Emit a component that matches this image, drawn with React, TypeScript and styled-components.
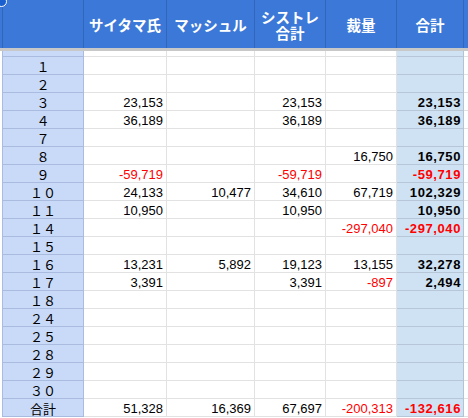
import React, { FC } from "react";
import styled, { createGlobalStyle, css } from "styled-components";

const GlobalStyle = createGlobalStyle`
  html, body {
    margin: 0;
    padding: 0;
    background: #ffffff;
  }
`;

const COLUMNS = "3px 81px 83px 88px 71px 71px 67px 1fr";

const Sheet = styled.div`
  position: relative;
  width: 468px;
  height: 418px;
  overflow: hidden;
  background: #ffffff;
  font-family: "Liberation Sans", Arial, "Noto Sans CJK JP", sans-serif;
`;

const Handle = styled.div`
  position: absolute;
  left: -4px;
  top: -4px;
  width: 9px;
  height: 9px;
  border-radius: 50%;
  background: #1a5fcf;
  border: 1.5px solid #ffffff;
`;

const HeaderRow = styled.div`
  display: grid;
  grid-template-columns: ${COLUMNS};
  height: 48px;
  background: #3c78d8;
`;

const HeaderCell = styled.div`
  display: flex;
  flex-direction: column;
  align-items: center;
  justify-content: center;
  padding-top: 1px;
  border-right: 1px solid #3166bd;
  color: #ffffff;
  font-family: "Noto Sans CJK JP", sans-serif;
  font-weight: 700;
  font-size: 14.5px;
  line-height: 17px;
  text-align: center;

  &:last-child {
    border-right: none;
  }
`;

const HeaderLine = styled.span`
  display: block;
  line-height: 16px;
  height: 16px;
`;

const FreezeBar = styled.div`
  height: 3px;
  background: #c8c8c8;
`;

const Row = styled.div<{ $h: number }>`
  display: grid;
  grid-template-columns: ${COLUMNS};
  height: ${({ $h }) => $h}px;
`;

type Kind = "strip" | "head" | "data" | "sum" | "rest";

const Cell = styled.div<{ $kind: Kind; $neg?: boolean }>`
  box-sizing: border-box;
  overflow: hidden;
  white-space: nowrap;
  border-bottom: 1px solid #e2e2e2;
  border-right: 1px solid #e2e2e2;
  font-size: 13px;
  line-height: 17px;
  padding-top: 1px;
  color: ${({ $neg }) => ($neg ? "#ff0000" : "#000000")};
  text-align: right;
  padding-right: 3px;

  ${({ $kind }) =>
    $kind === "strip" &&
    css`
      border-bottom: none;
      border-right-color: #a9bbdf;
      padding-right: 0;
    `}

  ${({ $kind }) =>
    $kind === "head" &&
    css`
      background: #c9daf8;
      border-bottom-color: #a9bbdf;
      border-right-color: #a9bbdf;
      text-align: center;
      padding-right: 0;
      font-family: "Noto Sans CJK JP", sans-serif;
      font-size: 13px;
    `}

  ${({ $kind }) =>
    $kind === "sum" &&
    css`
      background: #cfe2f3;
      border-bottom-color: #b7c7d7;
      border-right-color: #b3c3d3;
      font-weight: 700;
      letter-spacing: 0.6px;
      padding-right: 2px;
    `}

  ${({ $kind }) =>
    $kind === "rest" &&
    css`
      border-right: none;
      padding-right: 0;
    `}
`;

type Val = number | null;
type RowData = [string, Val, Val, Val, Val, Val];

const E: Val = null;

const ROWS: RowData[] = [
  ["１", E, E, E, E, E],
  ["２", E, E, E, E, E],
  ["３", 23153, E, 23153, E, 23153],
  ["４", 36189, E, 36189, E, 36189],
  ["７", E, E, E, E, E],
  ["８", E, E, E, 16750, 16750],
  ["９", -59719, E, -59719, E, -59719],
  ["１０", 24133, 10477, 34610, 67719, 102329],
  ["１１", 10950, E, 10950, E, 10950],
  ["１４", E, E, E, -297040, -297040],
  ["１５", E, E, E, E, E],
  ["１６", 13231, 5892, 19123, 13155, 32278],
  ["１７", 3391, E, 3391, -897, 2494],
  ["１８", E, E, E, E, E],
  ["２４", E, E, E, E, E],
  ["２５", E, E, E, E, E],
  ["２８", E, E, E, E, E],
  ["２９", E, E, E, E, E],
  ["３０", E, E, E, E, E],
  ["合計", 51328, 16369, 67697, -200313, -132616],
];

const fmt = (v: Val) => (v === null ? "" : v.toLocaleString("en-US"));

const SheetRow: FC<{ label: string; values: Val[]; height: number }> = ({
  label,
  values,
  height,
}) => (
  <Row $h={height}>
    <Cell $kind="strip" />
    <Cell $kind="head">{label}</Cell>
    {values.map((v, i) => (
      <Cell
        key={i}
        $kind={i === values.length - 1 ? "sum" : "data"}
        $neg={v !== null && v < 0}
      >
        {fmt(v)}
      </Cell>
    ))}
    <Cell $kind="rest" />
  </Row>
);

const App: FC = () => {
  return (
    <>
      <GlobalStyle />
      <Sheet>
        <HeaderRow>
          <HeaderCell />
          <HeaderCell />
          <HeaderCell>サイタマ氏</HeaderCell>
          <HeaderCell>マッシュル</HeaderCell>
          <HeaderCell>
            <HeaderLine>シストレ</HeaderLine>
            <HeaderLine>合計</HeaderLine>
          </HeaderCell>
          <HeaderCell>裁量</HeaderCell>
          <HeaderCell>合計</HeaderCell>
          <HeaderCell />
        </HeaderRow>
        <FreezeBar />
        <SheetRow label="" values={[E, E, E, E, E]} height={6} />
        {ROWS.map(([label, ...values]) => (
          <SheetRow key={label} label={label} values={values} height={18} />
        ))}
        <Handle />
      </Sheet>
    </>
  );
};

export default App;
